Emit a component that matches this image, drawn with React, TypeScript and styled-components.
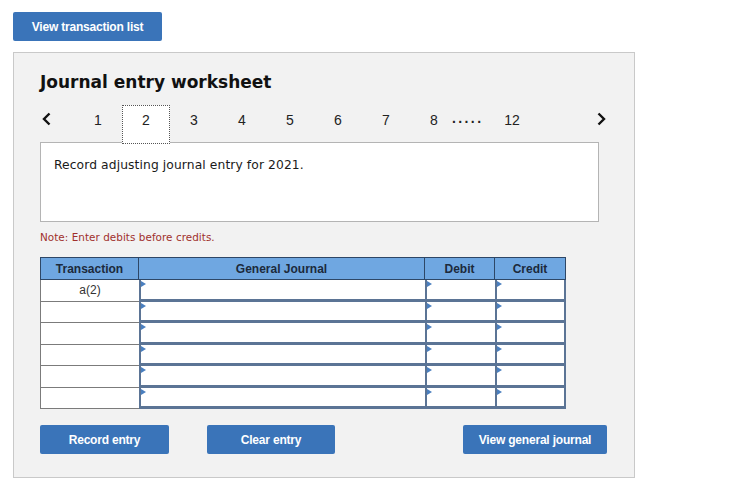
import styled, { createGlobalStyle } from "styled-components";

const GlobalStyle = createGlobalStyle`
  body {
    margin: 0;
    background: #ffffff;
    font-family: "Liberation Sans", Arial, sans-serif;
  }
`;

const tabs = ["1", "2", "3", "4", "5", "6", "7", "8"];
const rows = ["a(2)", "", "", "", "", ""];

const Chevron = ({ dir }: { dir: "left" | "right" }) => (
  <svg width="12" height="14" viewBox="0 0 12 14">
    <polyline
      points={dir === "left" ? "8.5,1.5 3,7 8.5,12.5" : "3.5,1.5 9,7 3.5,12.5"}
      fill="none"
      stroke="#111"
      strokeWidth="2.4"
    />
  </svg>
);

const App = () => {
  return (
    <S.Page>
      <GlobalStyle />
      <S.Button $width={149}>View transaction list</S.Button>
      <S.Panel>
        <S.Title>Journal entry worksheet</S.Title>
        <S.Pager>
          <S.Arrow>
            <Chevron dir="left" />
          </S.Arrow>
          {tabs.map((t) => (
            <S.Tab key={t} $active={t === "2"}>
              {t}
            </S.Tab>
          ))}
          <S.Dots>.....</S.Dots>
          <S.Tab>12</S.Tab>
          <S.Arrow $right>
            <Chevron dir="right" />
          </S.Arrow>
        </S.Pager>
        <S.Prompt>Record adjusting journal entry for 2021.</S.Prompt>
        <S.Note>Note: Enter debits before credits.</S.Note>
        <S.Grid>
          <S.Head>Transaction</S.Head>
          <S.Head>General Journal</S.Head>
          <S.Head>Debit</S.Head>
          <S.Head>Credit</S.Head>
          {rows.map((r, i) => (
            <S.Row key={i}>
              <S.TxCell>{r}</S.TxCell>
              <S.Input />
              <S.Input />
              <S.Input $last />
            </S.Row>
          ))}
        </S.Grid>
        <S.Actions>
          <S.Button $width={129}>Record entry</S.Button>
          <S.Button $width={128}>Clear entry</S.Button>
          <S.Button $width={144} $push>
            View general journal
          </S.Button>
        </S.Actions>
      </S.Panel>
    </S.Page>
  );
};

namespace S {
  export const Page = styled.div`
    padding: 12px 13px;
    width: 622px;
  `;

  export const Button = styled.button<{ $width: number; $push?: boolean }>`
    display: block;
    width: ${(p) => p.$width}px;
    height: 29px;
    border: none;
    border-radius: 2px;
    background: #3a74b9;
    color: #ffffff;
    font-family: "Liberation Sans", Arial, sans-serif;
    font-size: 12px;
    font-weight: 700;
    letter-spacing: -0.2px;
    padding: 0;
    margin-left: ${(p) => (p.$push ? "auto" : "0")};
  `;

  export const Panel = styled.div`
    margin-top: 11px;
    box-sizing: border-box;
    width: 622px;
    height: 426px;
    background: #f2f2f2;
    border: 1px solid #c9c9c9;
    padding: 0 26px 24px;
  `;

  export const Title = styled.h1`
    margin: 17px 0 0;
    font-family: "DejaVu Sans", Verdana, sans-serif;
    font-size: 17px;
    line-height: 24px;
    font-weight: 700;
    color: #111;
  `;

  export const Pager = styled.div`
    display: flex;
    align-items: flex-start;
    margin-top: 11px;
    height: 39px;
    position: relative;
    z-index: 1;
  `;

  export const Arrow = styled.div<{ $right?: boolean }>`
    width: 33px;
    height: 28px;
    display: flex;
    align-items: center;
    justify-content: ${(p) => (p.$right ? "flex-end" : "flex-start")};
    padding-left: 1px;
    margin-left: ${(p) => (p.$right ? "auto" : "0")};
    margin-right: ${(p) => (p.$right ? "1px" : "0")};
  `;

  export const Tab = styled.div<{ $active?: boolean }>`
    box-sizing: border-box;
    width: 48px;
    height: 39px;
    padding-top: 6px;
    text-align: center;
    font-size: 14px;
    line-height: 16px;
    color: #222;
    background: ${(p) => (p.$active ? "#ffffff" : "transparent")};
    border: 1px dotted ${(p) => (p.$active ? "#555" : "transparent")};
  `;

  export const Dots = styled.div`
    margin-left: -6px;
    width: 36px;
    padding-top: 5px;
    font-size: 14px;
    font-weight: 700;
    letter-spacing: 2.4px;
    line-height: 16px;
    color: #222;
  `;

  export const Prompt = styled.div`
    box-sizing: border-box;
    width: 559px;
    height: 80px;
    margin-top: -2px;
    background: #ffffff;
    border: 1px solid #b4b4b4;
    padding: 14px 13px 0;
    font-family: "DejaVu Sans", Verdana, sans-serif;
    font-size: 12.3px;
    letter-spacing: 0.1px;
    line-height: 16px;
    color: #1a1a1a;
  `;

  export const Note = styled.div`
    margin-top: 8px;
    font-family: "DejaVu Sans", Verdana, sans-serif;
    font-size: 10.4px;
    letter-spacing: 0.05px;
    line-height: 14px;
    color: #a0302c;
  `;

  export const Grid = styled.div`
    margin-top: 13px;
    width: 526px;
    display: grid;
    grid-template-columns: 99px 286px 70px 71px;
    grid-template-rows: 23px repeat(6, 21.5px);
  `;

  export const Head = styled.div`
    background: #6fa7e1;
    border: 1px solid #2e4766;
    border-left-width: 0;
    &:first-child {
      border-left-width: 1px;
    }
    display: flex;
    align-items: center;
    justify-content: center;
    font-size: 12px;
    font-weight: 700;
    color: #1c2a3c;
  `;

  export const Row = styled.div`
    display: contents;
  `;

  export const TxCell = styled.div`
    box-sizing: border-box;
    background: #ffffff;
    border-left: 1px solid #7b7b7b;
    border-bottom: 1px solid #7b7b7b;
    display: flex;
    align-items: center;
    justify-content: center;
    font-size: 12px;
    color: #333;
  `;

  export const Input = styled.div<{ $last?: boolean }>`
    position: relative;
    box-sizing: border-box;
    background: #ffffff;
    border-left: 2px solid #5b7495;
    border-bottom: 3px solid #5b7495;
    border-right: ${(p) => (p.$last ? "2px solid #5b7495" : "none")};

    &::before {
      content: "";
      position: absolute;
      left: 0;
      top: 1px;
      border-left: 5px solid #4a7fbf;
      border-top: 3px solid transparent;
      border-bottom: 3px solid transparent;
    }
  `;

  export const Actions = styled.div`
    display: flex;
    gap: 38px;
    margin-top: 16px;
    width: 567px;
  `;
}

export default App;
